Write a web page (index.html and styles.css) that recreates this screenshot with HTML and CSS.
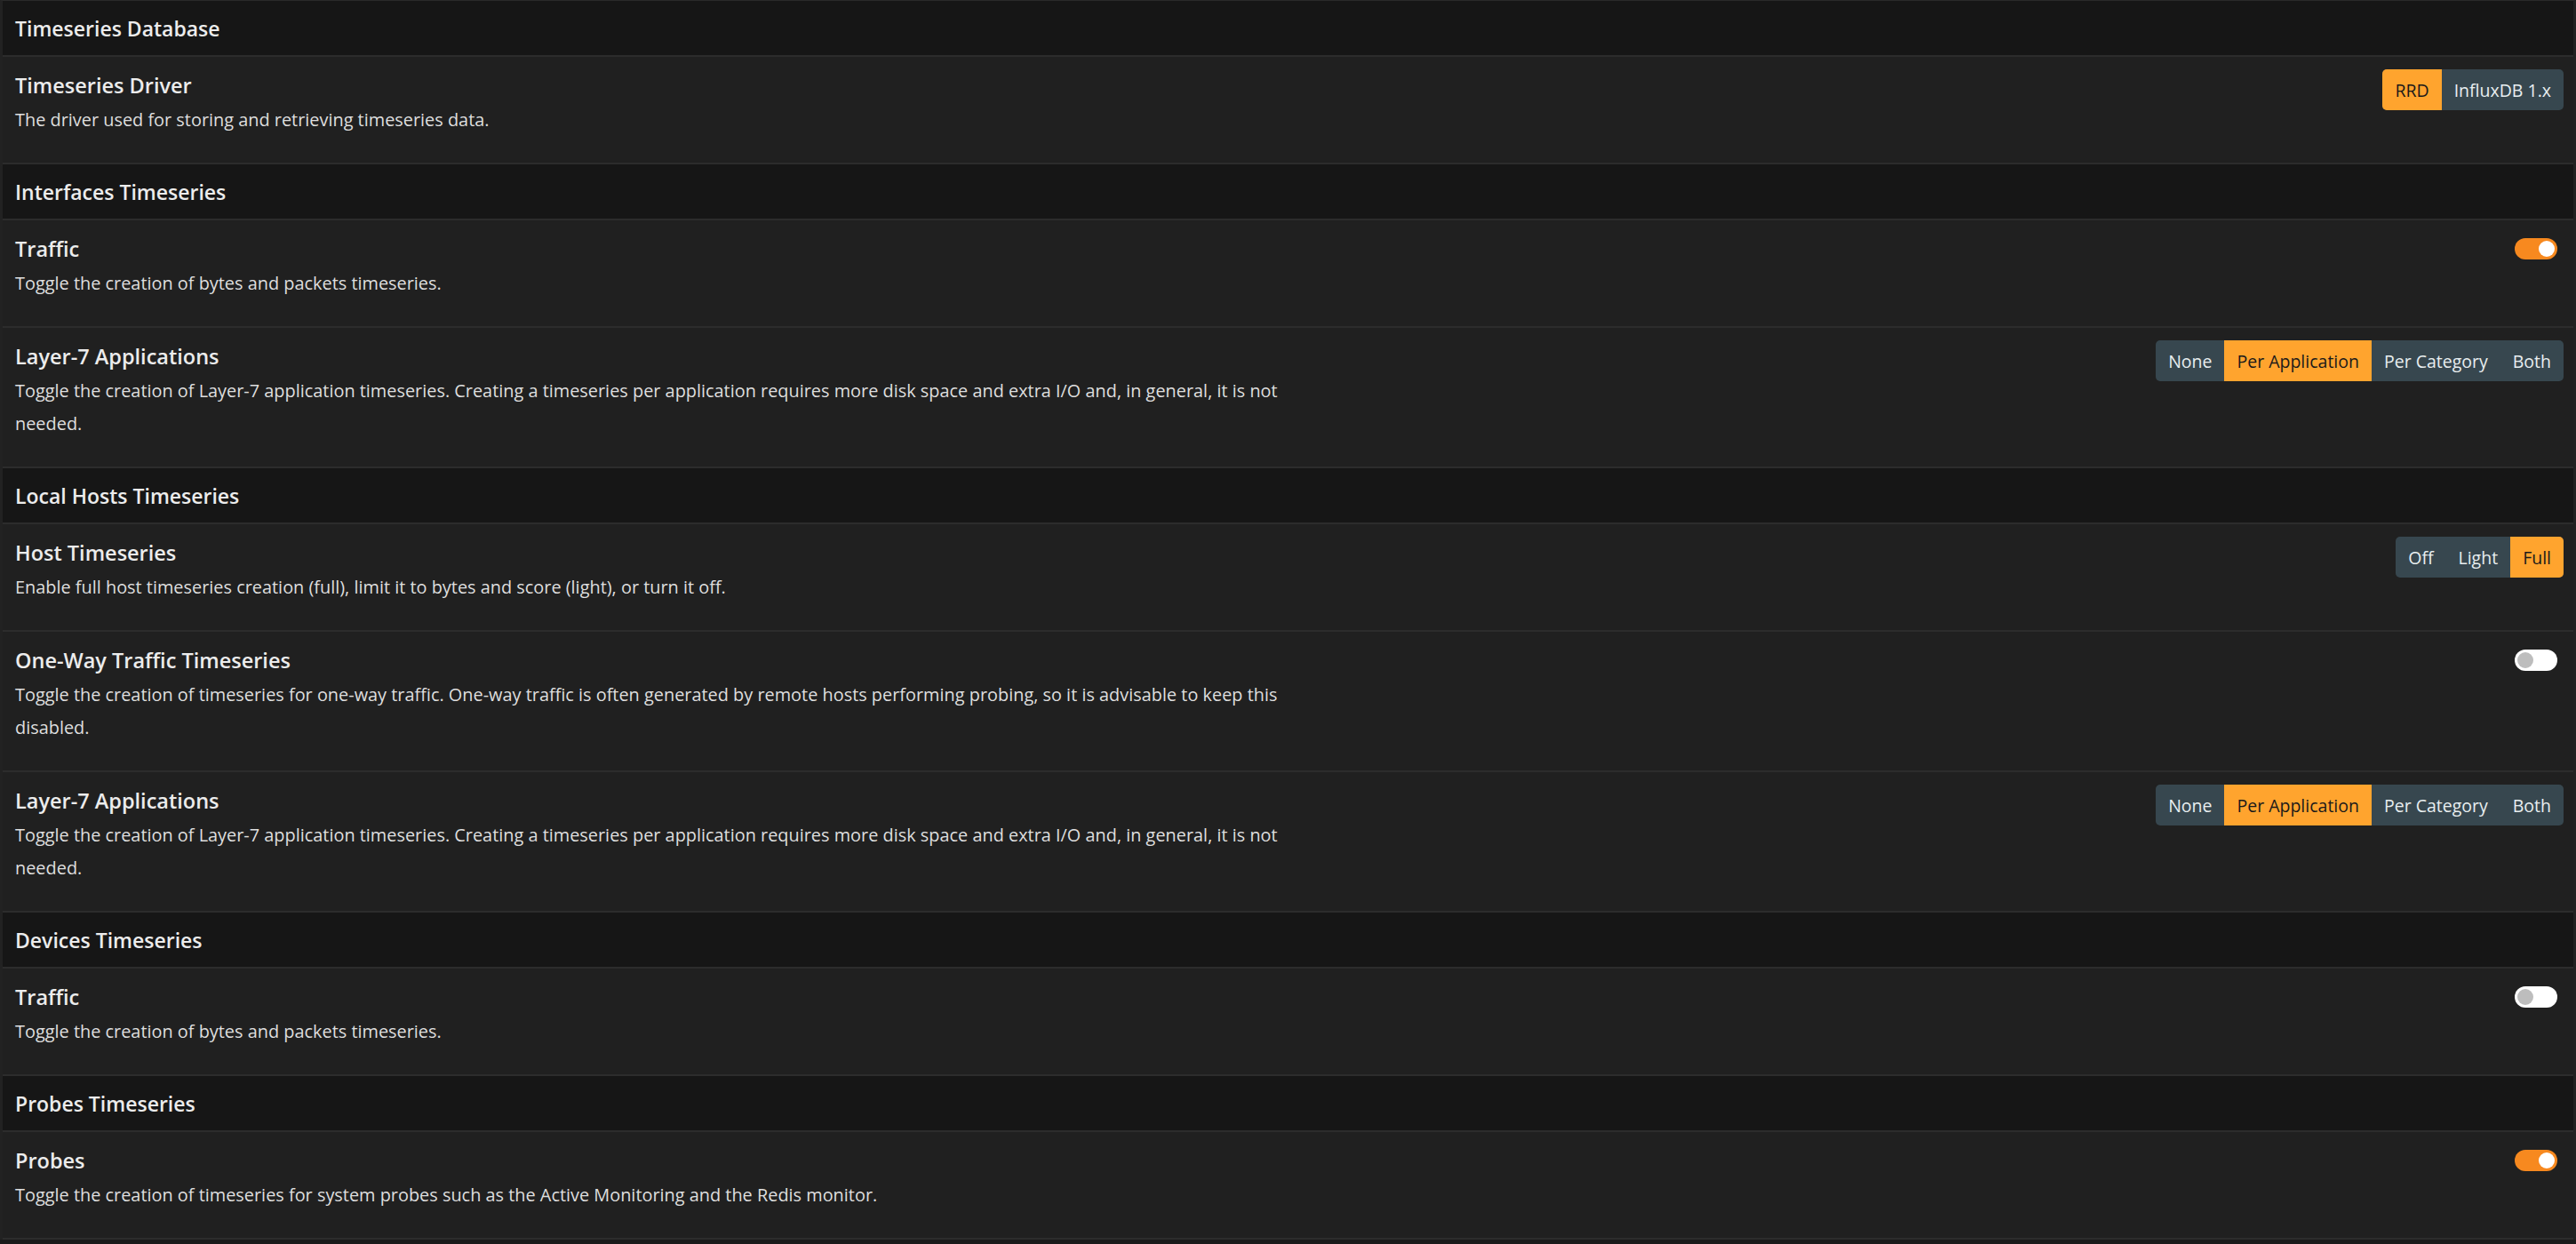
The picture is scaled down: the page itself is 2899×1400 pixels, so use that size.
FILE: index.html
```html
<!DOCTYPE html>
<html lang="en">
<head>
<meta charset="utf-8">
<title>Timeseries Preferences</title>
<link rel="stylesheet" href="styles.css">
</head>
<body>
<div class="prefs">
  <div class="section-head">Timeseries Database</div>
  <div class="row">
    <div class="info">
      <div class="title">Timeseries Driver</div>
      <div class="desc">The driver used for storing and retrieving timeseries data.</div>
    </div>
    <div class="control">
      <div class="btn-group">
        <span class="btn active">RRD</span><span class="btn">InfluxDB 1.x</span>
      </div>
    </div>
  </div>

  <div class="section-head">Interfaces Timeseries</div>
  <div class="row">
    <div class="info">
      <div class="title">Traffic</div>
      <div class="desc">Toggle the creation of bytes and packets timeseries.</div>
    </div>
    <div class="control"><span class="toggle on"><span class="knob"></span></span></div>
  </div>
  <div class="row">
    <div class="info">
      <div class="title">Layer-7 Applications</div>
      <div class="desc">Toggle the creation of Layer-7 application timeseries. Creating a timeseries per application requires more disk space and extra I/O and, in general, it is not needed.</div>
    </div>
    <div class="control">
      <div class="btn-group">
        <span class="btn">None</span><span class="btn active">Per Application</span><span class="btn">Per Category</span><span class="btn">Both</span>
      </div>
    </div>
  </div>

  <div class="section-head">Local Hosts Timeseries</div>
  <div class="row">
    <div class="info">
      <div class="title">Host Timeseries</div>
      <div class="desc">Enable full host timeseries creation (full), limit it to bytes and score (light), or turn it off.</div>
    </div>
    <div class="control">
      <div class="btn-group">
        <span class="btn">Off</span><span class="btn">Light</span><span class="btn active">Full</span>
      </div>
    </div>
  </div>
  <div class="row">
    <div class="info">
      <div class="title">One-Way Traffic Timeseries</div>
      <div class="desc">Toggle the creation of timeseries for one-way traffic. One-way traffic is often generated by remote hosts performing probing, so it is advisable to keep this disabled.</div>
    </div>
    <div class="control"><span class="toggle"><span class="knob"></span></span></div>
  </div>
  <div class="row">
    <div class="info">
      <div class="title">Layer-7 Applications</div>
      <div class="desc">Toggle the creation of Layer-7 application timeseries. Creating a timeseries per application requires more disk space and extra I/O and, in general, it is not needed.</div>
    </div>
    <div class="control">
      <div class="btn-group">
        <span class="btn">None</span><span class="btn active">Per Application</span><span class="btn">Per Category</span><span class="btn">Both</span>
      </div>
    </div>
  </div>

  <div class="section-head">Devices Timeseries</div>
  <div class="row">
    <div class="info">
      <div class="title">Traffic</div>
      <div class="desc">Toggle the creation of bytes and packets timeseries.</div>
    </div>
    <div class="control"><span class="toggle"><span class="knob"></span></span></div>
  </div>

  <div class="section-head">Probes Timeseries</div>
  <div class="row">
    <div class="info">
      <div class="title">Probes</div>
      <div class="desc">Toggle the creation of timeseries for system probes such as the Active Monitoring and the Redis monitor.</div>
    </div>
    <div class="control"><span class="toggle on"><span class="knob"></span></span></div>
  </div>
</div>
</body>
</html>
```

FILE: styles.css
```css
html, body {
  margin: 0;
  padding: 0;
  background: #1b1b1b;
}

body {
  font-family: "Open Sans", "Noto Sans", "Liberation Sans", sans-serif;
  color: #e6e6e6;
}

.prefs {
  border-top: 1px solid #2a2a2a;
  border-left: 3px solid #222222;
  border-right: 3px solid #222222;
}

.section-head {
  background: #161616;
  height: 61px;
  display: flex;
  align-items: center;
  padding-left: 14px;
  font-size: 23px;
  font-weight: 600;
  color: #ececec;
  border-bottom: 2px solid #2c2c2c;
}

.row {
  background: #202020;
  display: flex;
  justify-content: space-between;
  align-items: flex-start;
  padding: 14px 11px 30px 14px;
  border-bottom: 2px solid #2c2c2c;
}

.info {
  max-width: 1450px;
}

.title {
  font-size: 23.5px;
  font-weight: 600;
  line-height: 36px;
  color: #ececec;
}

.desc {
  margin-top: 2px;
  font-size: 19.9px;
  line-height: 37px;
  color: #dedede;
}

.control {
  display: flex;
  justify-content: flex-end;
}

.btn-group {
  display: flex;
  border-radius: 5px;
  overflow: hidden;
  background: #37474f;
  height: 46px;
}

.btn {
  display: flex;
  align-items: center;
  padding: 0 14px;
  font-size: 19.5px;
  color: #e8eef0;
}

.btn.active {
  background: #ffa42e;
  color: #1a1a1a;
}

.toggle {
  display: block;
  position: relative;
  width: 48px;
  height: 24px;
  margin: 6px 7px 0 0;
  border-radius: 12px;
  background: #ffffff;
}

.toggle .knob {
  position: absolute;
  top: 3px;
  left: 3px;
  width: 18px;
  height: 18px;
  border-radius: 50%;
  background: #bdbdbd;
}

.toggle.on {
  background: #f7891f;
}

.toggle.on .knob {
  left: auto;
  right: 3px;
  background: #ffffff;
}
```
